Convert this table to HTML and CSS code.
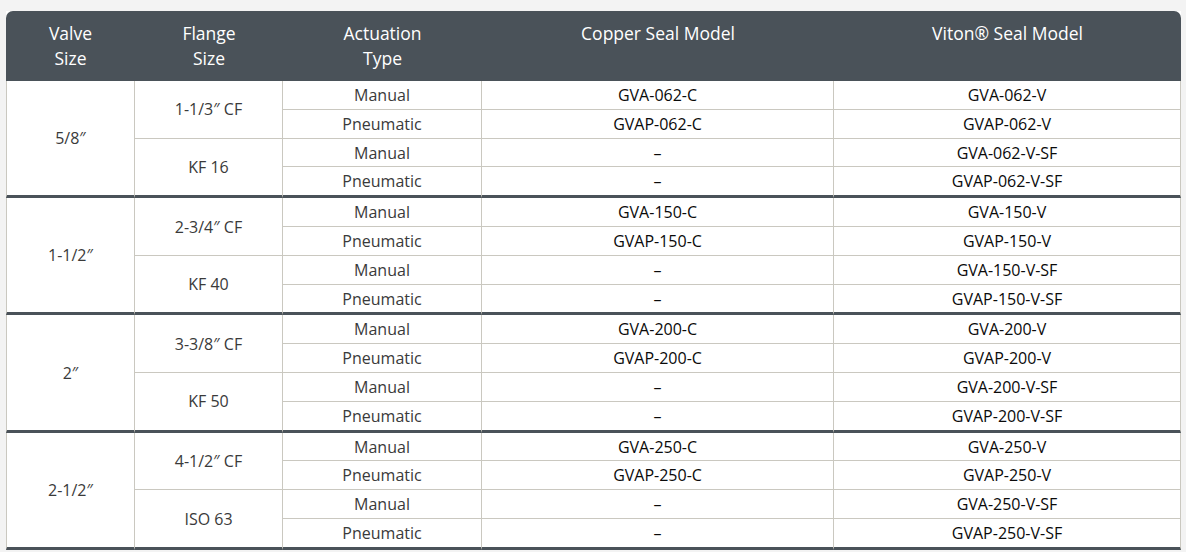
FILE: index.html
```html
<!DOCTYPE html>
<html lang="en">
<head>
<meta charset="utf-8">
<title>Gate Valve Models</title>
<link rel="stylesheet" href="styles.css">
</head>
<body>
<table class="spec">
  <thead>
    <tr>
      <th class="c1">Valve<br>Size</th>
      <th class="c2">Flange<br>Size</th>
      <th class="c3">Actuation<br>Type</th>
      <th class="c4">Copper Seal Model</th>
      <th class="c5">Viton® Seal Model</th>
    </tr>
  </thead>
  <tbody>
    <tr><td rowspan="4">5/8″</td><td rowspan="2">1-1/3″ CF</td><td>Manual</td><td class="m">GVA-062-C</td><td class="m">GVA-062-V</td></tr>
    <tr><td>Pneumatic</td><td class="m">GVAP-062-C</td><td class="m">GVAP-062-V</td></tr>
    <tr><td rowspan="2">KF 16</td><td>Manual</td><td class="m">–</td><td class="m">GVA-062-V-SF</td></tr>
    <tr><td>Pneumatic</td><td class="m">–</td><td class="m">GVAP-062-V-SF</td></tr>
  </tbody>
  <tbody>
    <tr><td rowspan="4">1-1/2″</td><td rowspan="2">2-3/4″ CF</td><td>Manual</td><td class="m">GVA-150-C</td><td class="m">GVA-150-V</td></tr>
    <tr><td>Pneumatic</td><td class="m">GVAP-150-C</td><td class="m">GVAP-150-V</td></tr>
    <tr><td rowspan="2">KF 40</td><td>Manual</td><td class="m">–</td><td class="m">GVA-150-V-SF</td></tr>
    <tr><td>Pneumatic</td><td class="m">–</td><td class="m">GVAP-150-V-SF</td></tr>
  </tbody>
  <tbody>
    <tr><td rowspan="4">2″</td><td rowspan="2">3-3/8″ CF</td><td>Manual</td><td class="m">GVA-200-C</td><td class="m">GVA-200-V</td></tr>
    <tr><td>Pneumatic</td><td class="m">GVAP-200-C</td><td class="m">GVAP-200-V</td></tr>
    <tr><td rowspan="2">KF 50</td><td>Manual</td><td class="m">–</td><td class="m">GVA-200-V-SF</td></tr>
    <tr><td>Pneumatic</td><td class="m">–</td><td class="m">GVAP-200-V-SF</td></tr>
  </tbody>
  <tbody>
    <tr><td rowspan="4">2-1/2″</td><td rowspan="2">4-1/2″ CF</td><td>Manual</td><td class="m">GVA-250-C</td><td class="m">GVA-250-V</td></tr>
    <tr><td>Pneumatic</td><td class="m">GVAP-250-C</td><td class="m">GVAP-250-V</td></tr>
    <tr><td rowspan="2">ISO 63</td><td>Manual</td><td class="m">–</td><td class="m">GVA-250-V-SF</td></tr>
    <tr><td>Pneumatic</td><td class="m">–</td><td class="m">GVAP-250-V-SF</td></tr>
  </tbody>
</table>
</body>
</html>
```

FILE: styles.css
```css
html, body {
  margin: 0;
  background: #f3f3f3;
}
body {
  padding: 11px 5px 0 6px;
  font-family: "Open Sans", "Liberation Sans", sans-serif;
}
.spec {
  width: 1175px;
  table-layout: fixed;
  border-collapse: separate;
  border-spacing: 0;
  background: #ffffff;
}
.spec th, .spec td {
  box-sizing: border-box;
}
.spec th {
  background: #4a5259;
  color: #ffffff;
  font-weight: 400;
  font-size: 17.5px;
  line-height: 25px;
  padding: 10px 0;
  vertical-align: top;
  text-align: center;
}
.spec th.c1 { width: 129px; border-top-left-radius: 7px; }
.spec th.c2 { width: 148px; }
.spec th.c3 { width: 199px; }
.spec th.c4 { width: 352px; }
.spec th.c5 { width: 347px; border-top-right-radius: 7px; }
.spec td {
  font-size: 16px;
  line-height: 19.8px;
  padding: 5px 4px 3px;
  color: #3a3a3a;
  text-align: center;
  vertical-align: middle;
  border-right: 1px solid #cac8c0;
  border-bottom: 1px solid #cac8c0;
}
.spec tbody tr:first-child td:first-child {
  border-left: 1px solid #cac8c0;
}
.spec td.m {
  color: #0a0a0a;
  font-weight: 400;
}
.spec tbody tr:first-child td:first-child,
.spec tbody tr:nth-child(3) td:first-child,
.spec tbody tr:last-child td {
  border-bottom: 3px solid #4a5259;
}
```
